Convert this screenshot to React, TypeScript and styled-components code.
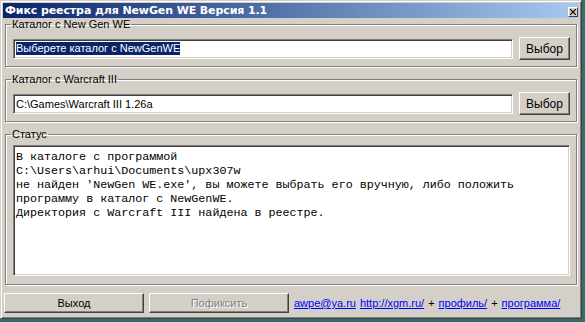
import React from "react";
import styled, { createGlobalStyle } from "styled-components";

const GlobalStyle = createGlobalStyle`
  html, body {
    margin: 0;
    padding: 0;
    background: #336e6c;
  }
  body {
    font-family: "Liberation Sans", Tahoma, sans-serif;
    font-size: 11px;
  }
`;

const Window = styled.div`
  box-sizing: border-box;
  width: 582px;
  height: 319px;
  background: #d4d0c8;
  border: 1px solid;
  border-color: #d4d0c8 #404040 #404040 #d4d0c8;
  box-shadow: inset 1px 1px 0 #fff, inset -1px -1px 0 #808080;
  padding: 2px;
  display: flex;
  flex-direction: column;
`;

const TitleBar = styled.div`
  height: 15px;
  display: flex;
  align-items: center;
  justify-content: space-between;
  background: linear-gradient(to right, #0a246a, #a6caf0);
  padding: 0 1px 0 2px;
`;

const Title = styled.span`
  color: #fff;
  font-family: "DejaVu Sans", Tahoma, sans-serif;
  font-weight: bold;
  font-size: 11px;
  letter-spacing: -0.1px;
  line-height: 15px;
  white-space: nowrap;
`;

const CloseButton = styled.div`
  box-sizing: border-box;
  width: 10px;
  height: 10px;
  margin-top: 3px;
  background: #d4d0c8;
  border: 1px solid;
  border-color: #fff #404040 #404040 #fff;
  display: flex;
  align-items: center;
  justify-content: center;
`;

const Group = styled.fieldset<{ $grow?: boolean }>`
  margin: 0 2px;
  padding: 6px 6px 6px 7px;
  border: 1px solid #808080;
  box-shadow: 1px 1px 0 #fff, inset 1px 1px 0 #fff;
  display: flex;
  flex-direction: column;
  min-width: 0;
  ${({ $grow }) => ($grow ? "flex: 1; padding-top: 4px; padding-bottom: 8px;" : "")}

  & + & {
    margin-top: 6px;
  }
`;

const Legend = styled.legend`
  padding: 0 1px;
  margin-left: -2px;
  font-size: 11px;
  line-height: 13px;
  color: #000;
`;

const Row = styled.div`
  display: flex;
  align-items: center;
  gap: 6px;
`;

const Field = styled.div`
  box-sizing: border-box;
  flex: 1;
  height: 20px;
  background: #fff;
  border: 1px solid;
  border-color: #808080 #fff #fff #808080;
  box-shadow: inset 1px 1px 0 #404040, inset -1px -1px 0 #d4d0c8;
  padding: 0 0 0 2px;
  display: flex;
  align-items: center;
  font-size: 11px;
  color: #000;
  white-space: nowrap;
  overflow: hidden;
`;

const Selected = styled.span`
  background: #0a246a;
  color: #fff;
  line-height: 13px;
`;

const Button = styled.div<{ $width?: number; $disabled?: boolean }>`
  box-sizing: border-box;
  width: ${({ $width }) => $width ?? 51}px;
  height: ${({ $width }) => ($width ? 20 : 23)}px;
  background: #d4d0c8;
  border: 1px solid;
  border-color: #fff #404040 #404040 #fff;
  box-shadow: inset -1px -1px 0 #808080;
  display: flex;
  align-items: center;
  justify-content: center;
  font-size: ${({ $width }) => ($width ? 11 : 12)}px;
  color: ${({ $disabled }) => ($disabled ? "#808080" : "#000")};
  text-shadow: ${({ $disabled }) => ($disabled ? "1px 1px 0 #fff" : "none")};
  flex-shrink: 0;
`;

const StatusBox = styled.div`
  box-sizing: border-box;
  flex: 1;
  background: #fff;
  border: 1px solid;
  border-color: #808080 #fff #fff #808080;
  box-shadow: inset 1px 1px 0 #404040, inset -1px -1px 0 #d4d0c8;
  padding: 4px 2px 2px 2px;
  font-family: "Liberation Mono", "Courier New", monospace;
  font-size: 11.7px;
  line-height: 14px;
  color: #000;
  white-space: pre;
  overflow: hidden;
`;

const Footer = styled.div`
  display: flex;
  align-items: center;
  gap: 5px;
  margin: 8px 0 3px 1px;
`;

const Links = styled.div`
  display: flex;
  align-items: center;
  gap: 4px;
  font-size: 11px;
  color: #000;
  white-space: nowrap;
`;

const Link = styled.a`
  color: #0000ff;
  text-decoration: underline;
`;

const statusText = `В каталоге с программой
C:\\Users\\arhui\\Documents\\upx307w
не найден 'NewGen WE.exe', вы можете выбрать его вручную, либо положить
программу в каталог с NewGenWE.
Директория с Warcraft III найдена в реестре.`;

export default function App() {
  return (
    <>
      <GlobalStyle />
      <Window>
        <TitleBar>
          <Title>Фикс реестра для NewGen WE Версия 1.1</Title>
          <CloseButton>
            <svg width="6" height="6" viewBox="0 0 6 6">
              <path d="M0 0L6 6M6 0L0 6" stroke="#000" strokeWidth="1.2" />
            </svg>
          </CloseButton>
        </TitleBar>

        <Group>
          <Legend>Каталог с New Gen WE</Legend>
          <Row>
            <Field>
              <Selected>Выберете каталог с NewGenWE</Selected>
            </Field>
            <Button>Выбор</Button>
          </Row>
        </Group>

        <Group>
          <Legend>Каталог с Warcraft III</Legend>
          <Row>
            <Field>C:\Games\Warcraft III 1.26a</Field>
            <Button>Выбор</Button>
          </Row>
        </Group>

        <Group $grow>
          <Legend>Статус</Legend>
          <StatusBox>{statusText}</StatusBox>
        </Group>

        <Footer>
          <Button $width={140}>Выход</Button>
          <Button $width={140} $disabled>
            Пофиксить
          </Button>
          <Links>
            <Link href="#">awpe@ya.ru</Link>
            <Link href="#">http://xgm.ru/</Link>
            <span>+</span>
            <Link href="#">профиль/</Link>
            <span>+</span>
            <Link href="#">программа/</Link>
          </Links>
        </Footer>
      </Window>
    </>
  );
}
